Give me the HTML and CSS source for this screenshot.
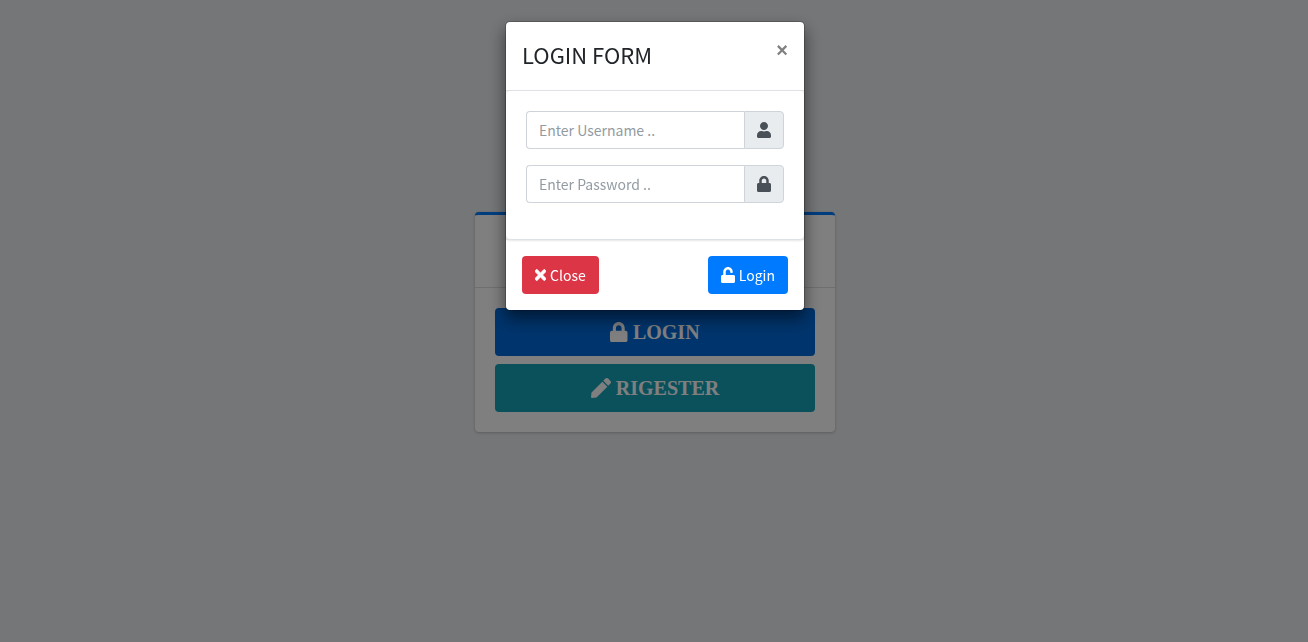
FILE: index.html
```html
<!DOCTYPE html>
<html lang="en">
<head>
<meta charset="utf-8">
<meta name="viewport" content="width=device-width, initial-scale=1">
<title>Login</title>
<link rel="stylesheet" href="styles.css">
</head>
<body>
<main class="page">
  <section class="card">
    <div class="card-header"></div>
    <div class="card-body">
      <button type="button" class="btn btn-lg btn-primary"><svg class="icon icon-lg" viewBox="0 0 448 512" aria-hidden="true"><path d="M400 224h-24v-72C376 68.200 307.800 0 224 0S72 68.200 72 152v72H48c-26.500 0-48 21.500-48 48v192c0 26.500 21.500 48 48 48h352c26.500 0 48-21.500 48-48V272c0-26.500-21.500-48-48-48zm-104 0H152v-72c0-39.700 32.300-72 72-72s72 32.300 72 72v72z"/></svg><span>LOGIN</span></button>
      <button type="button" class="btn btn-lg btn-info"><svg class="icon icon-lg" viewBox="0 0 512 512" aria-hidden="true"><path d="M290.740 93.240l128.020 128.020-277.990 277.990-114.140 12.600C11.350 513.540-1.560 500.620.140 485.340l12.700-114.220 277.900-277.880zm207.200-19.060l-60.110-60.110c-18.750-18.750-49.160-18.750-67.910 0l-56.550 56.550 128.020 128.020 56.550-56.550c18.750-18.760 18.750-49.160 0-67.910z"/></svg><span>RIGESTER</span></button>
    </div>
  </section>
</main>
<div class="backdrop">
  <form class="modal" role="dialog" aria-modal="true" aria-labelledby="modal-title">
    <header class="modal-header">
      <h1 class="modal-title" id="modal-title">LOGIN FORM</h1>
      <button type="button" class="dismiss" aria-label="Dismiss">×</button>
    </header>
    <div class="modal-body">
      <div class="input-group">
        <input class="field" id="username" type="text" placeholder="Enter Username .." aria-label="Username">
        <label class="addon" for="username"><svg class="icon" viewBox="0 0 448 512" aria-hidden="true"><path d="M224 256c70.700 0 128-57.300 128-128S294.700 0 224 0 96 57.300 96 128s57.300 128 128 128zm89.600 32h-16.700c-22.200 10.200-46.900 16-72.900 16s-50.600-5.800-72.900-16h-16.700C60.200 288 0 348.200 0 422.400V464c0 26.500 21.500 48 48 48h352c26.500 0 48-21.500 48-48v-41.600c0-74.200-60.200-134.400-134.400-134.400z"/></svg></label>
      </div>
      <div class="input-group">
        <input class="field" id="password" type="password" placeholder="Enter Password .." aria-label="Password">
        <label class="addon" for="password"><svg class="icon" viewBox="0 0 448 512" aria-hidden="true"><path d="M400 224h-24v-72C376 68.200 307.800 0 224 0S72 68.200 72 152v72H48c-26.500 0-48 21.500-48 48v192c0 26.500 21.500 48 48 48h352c26.500 0 48-21.500 48-48V272c0-26.500-21.500-48-48-48zm-104 0H152v-72c0-39.700 32.300-72 72-72s72 32.300 72 72v72z"/></svg></label>
      </div>
    </div>
    <footer class="modal-footer">
      <button type="button" class="btn btn-danger"><svg class="icon icon-close" viewBox="0 0 352 512" aria-hidden="true"><path d="M242.720 256l100.070-100.070c12.280-12.280 12.280-32.190 0-44.480l-22.240-22.240c-12.280-12.280-32.190-12.280-44.480 0L176 189.280 75.930 89.210c-12.280-12.280-32.190-12.280-44.480 0L9.210 111.450c-12.280 12.280-12.280 32.190 0 44.480L109.280 256 9.210 356.070c-12.280 12.280-12.280 32.190 0 44.480l22.240 22.240c12.280 12.280 32.200 12.280 44.480 0L176 322.720l100.070 100.070c12.280 12.280 32.200 12.280 44.480 0l22.240-22.240c12.280-12.280 12.280-32.190 0-44.480L242.720 256z"/></svg><span>Close</span></button>
      <button type="submit" class="btn btn-primary"><svg class="icon" viewBox="0 0 448 512" aria-hidden="true"><path d="M400 256H152V152.900c0-39.600 31.700-72.500 71.300-72.900 40-.4 72.700 32.100 72.700 72v16c0 13.300 10.700 24 24 24h32c13.300 0 24-10.700 24-24v-16C376 68 307.500-.3 223.500 0 139.500.3 72 69.500 72 153.500V256H48c-26.500 0-48 21.500-48 48v160c0 26.500 21.500 48 48 48h352c26.500 0 48-21.500 48-48V304c0-26.500-21.500-48-48-48z"/></svg><span>Login</span></button>
    </footer>
  </form>
</div>
</body>
</html>
```
FILE: styles.css
```css
*, *::before, *::after { box-sizing: border-box; }

body {
  margin: 0;
  background: #e9ecef;
  color: #212529;
  font: 14px/24px "Noto Sans CJK SC", "Noto Sans", sans-serif;
}

.page {
  display: flex;
  align-items: center;
  justify-content: center;
  min-height: 100vh;
  padding-top: 2px;
  padding-left: 2px;
}

.card {
  width: 360px;
  border-top: 3px solid #007bff;
  border-radius: 4px;
  background: #fff;
  box-shadow: 0 0 1px rgba(0, 0, 0, .125), 0 1px 3px rgba(0, 0, 0, .2);
}

.card-header {
  min-height: 73px;
  border-bottom: 1px solid rgba(0, 0, 0, .125);
}

.card-body {
  display: grid;
  gap: 8px;
  padding: 20px;
}

.btn {
  display: flex;
  align-items: center;
  justify-content: center;
  gap: 4px;
  padding: 6px 12px;
  border: 1px solid transparent;
  border-radius: 4px;
  color: #fff;
  font: inherit;
  cursor: pointer;
}

.btn-lg {
  gap: 5px;
  padding: 8px 16px;
  font: bold 20px/30px "Liberation Serif", serif;
}

.btn-primary { background: #007bff; }
.btn-lg.btn-primary { background: #0069d9; }
.btn-info { background: #17a2b8; }
.btn-danger { background: #dc3545; }

.icon {
  height: 16px;
  fill: currentColor;
}

.icon-lg { height: 20px; }

.icon-close {
  stroke: currentColor;
  stroke-width: 24px;
}

.backdrop {
  position: fixed;
  inset: 0;
  padding-top: 21px;
  padding-left: 2px;
  background: rgba(0, 0, 0, .5);
  overflow: auto;
}

.modal {
  max-width: 300px;
  margin: 0 auto;
  border: 1px solid rgba(0, 0, 0, .2);
  border-radius: 5px;
  background: #fff;
  background-clip: padding-box;
  box-shadow: 0 8px 16px rgba(0, 0, 0, .5);
}

.modal-header {
  position: relative;
  display: flex;
  align-items: flex-start;
  justify-content: space-between;
  padding: 16px 16px 20px;
  border-bottom: 1px solid #dee2e6;
}

.modal-title {
  margin: 0;
  font-size: 22px;
  font-weight: 400;
  line-height: 32px;
}

.dismiss {
  padding: 0;
  border: 0;
  background: none;
  color: #808080;
  font: bold 20px/24px "Liberation Sans", sans-serif;
  cursor: pointer;
}

.modal-body {
  display: grid;
  gap: 16px;
  padding: 20px 20px 36px;
  border-radius: 4px;
  box-shadow: 0 0 1px rgba(0, 0, 0, .125), 0 1px 3px rgba(0, 0, 0, .2);
}

.input-group { display: flex; }

.field {
  flex: 1;
  min-width: 0;
  height: 38px;
  padding: 6px 12px;
  border: 1px solid #ced4da;
  border-right: 0;
  border-radius: 4px 0 0 4px;
  background: #fff;
  color: #495057;
  font: inherit;
}

.field::placeholder { color: #939ba2; opacity: 1; }

.addon {
  display: flex;
  align-items: center;
  padding: 0 12px;
  border: 1px solid #ced4da;
  border-radius: 0 4px 4px 0;
  background: #e9ecef;
  color: #495057;
}

.modal-footer {
  display: flex;
  justify-content: space-between;
  padding: 16px;
  border-top: 1px solid #dee2e6;
}
```
